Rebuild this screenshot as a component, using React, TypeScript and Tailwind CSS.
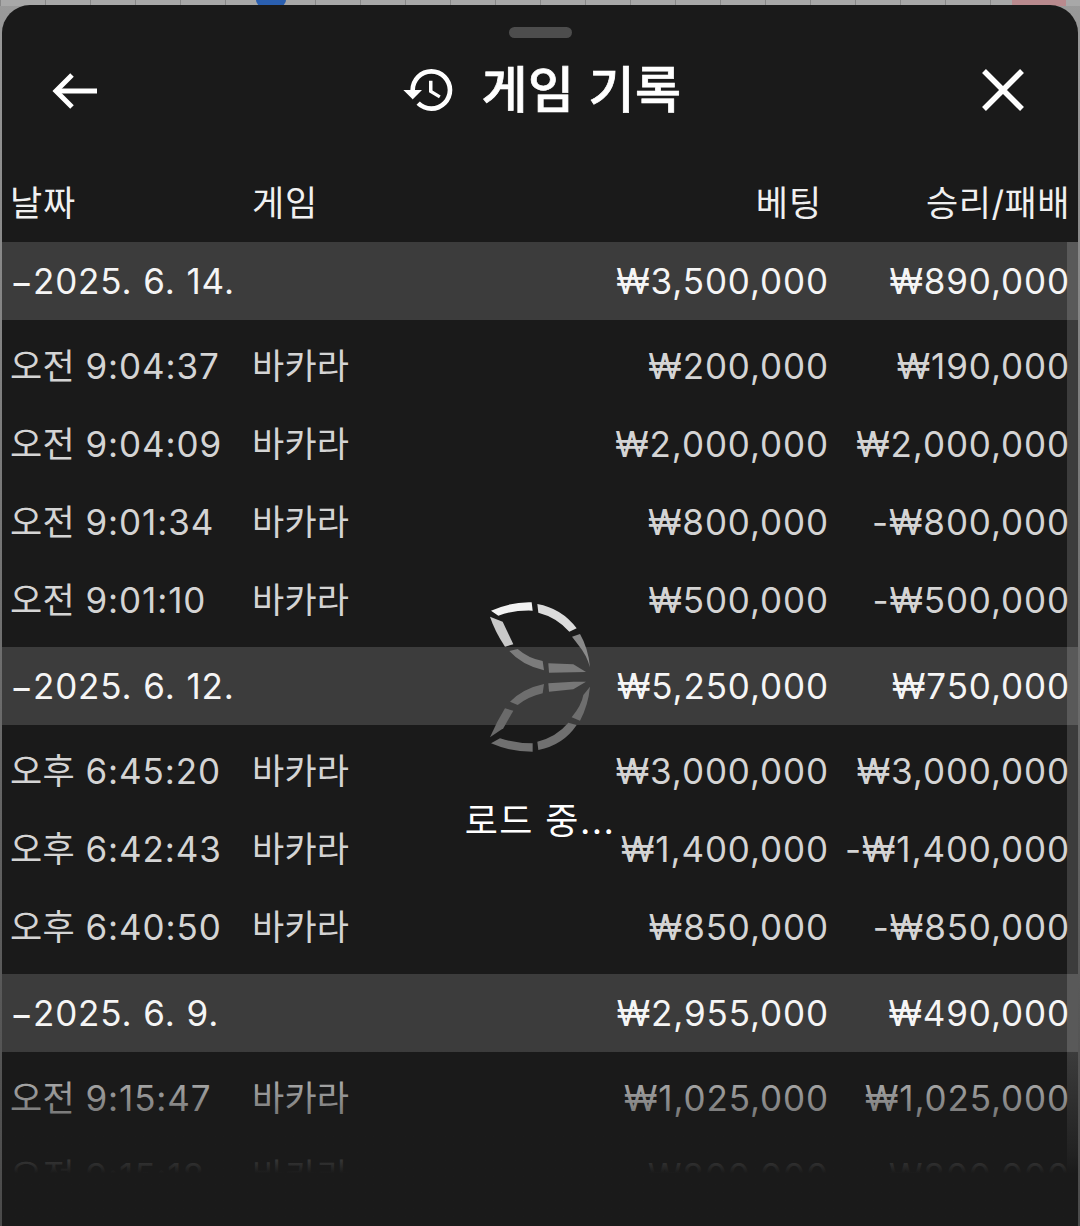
import React from "react";

const FONT = '"Inter","Noto Sans CJK KR",sans-serif';

type Row = [string, string, string, string];
const groups: { date: string; bet: string; win: string; rows: Row[] }[] = [
  { date: "2025. 6. 14.", bet: "₩3,500,000", win: "₩890,000", rows: [
    ["오전", "9:04:37", "₩200,000", "₩190,000"],
    ["오전", "9:04:09", "₩2,000,000", "₩2,000,000"],
    ["오전", "9:01:34", "₩800,000", "-₩800,000"],
    ["오전", "9:01:10", "₩500,000", "-₩500,000"],
  ]},
  { date: "2025. 6. 12.", bet: "₩5,250,000", win: "₩750,000", rows: [
    ["오후", "6:45:20", "₩3,000,000", "₩3,000,000"],
    ["오후", "6:42:43", "₩1,400,000", "-₩1,400,000"],
    ["오후", "6:40:50", "₩850,000", "-₩850,000"],
  ]},
  { date: "2025. 6. 9.", bet: "₩2,955,000", win: "₩490,000", rows: [
    ["오전", "9:15:47", "₩1,025,000", "₩1,025,000"],
    ["오전", "9:15:18", "₩800,000", "₩800,000"],
  ]},
];

const grid = "grid grid-cols-[242px_1fr_auto_240px] items-center pl-[8px] pr-[8px]";

function Logo() {
  const segs: [string, string][] = [
    ["M123 62 Q185 35 245 37 L248 62 Q190 60 145 77 Z", "#f2f2f2"],
    ["M262 42 Q335 55 380 115 L358 125 Q320 82 265 68 Z", "#dcdcdc"],
    ["M366 140 L390 132 Q415 175 420 232 Q410 195 385 165 Z", "#8a8a8a"],
    ["M295 220 L370 223 L408 246 L297 248 Z", "#7a7a7a"],
    ["M178 183 L203 177 Q235 205 278 213 L282 241 Q215 225 178 183 Z", "#7c7c7c"],
    ["M120 80 L158 95 L190 163 L165 170 Q135 125 120 80 Z", "#c8c8c8"],
    ["M295 280 L370 275 L408 275 L370 298 L297 305 Z", "#777777"],
    ["M282 282 L278 310 Q235 320 203 345 L180 335 Q220 295 282 282 Z", "#6e6e6e"],
    ["M420 290 Q415 345 390 392 L365 382 Q395 345 400 315 Z", "#6e6e6e"],
    ["M165 355 L190 362 L160 415 L120 442 Q140 395 165 355 Z", "#6a6a6a"],
    ["M380 405 L355 398 Q320 440 262 455 L265 480 Q340 465 380 405 Z", "#707070"],
    ["M123 460 L150 445 Q200 460 248 460 L248 485 Q180 485 123 460 Z", "#707070"],
  ];
  return (
    <svg width="180" height="176" viewBox="0 0 540 528" className="block">
      {segs.map(([d, f], i) => <path key={i} d={d} fill={f} />)}
    </svg>
  );
}

export default function App() {
  return (
    <div className="relative h-[1226px] w-[1080px] overflow-hidden bg-gradient-to-b from-[#9a9a9a] to-[#4a4a4a] pt-[5px] pr-[2px] pl-[2px]" style={{ fontFamily: FONT }}>
      <div className="absolute inset-x-0 top-0 h-[6px] bg-[repeating-linear-gradient(90deg,#888888_0,#888888_1px,#a8a8a8_1px,#a8a8a8_45px)]" />
      <div className="absolute left-[256px] top-0 h-[6px] w-[30px] rounded-b-full bg-[#2a5fb0]" />
      <div className="absolute left-[1012px] top-0 h-[6px] w-[54px] bg-[#b98a8e]" />
      <div className="relative flex h-full flex-col overflow-hidden rounded-t-[28px] bg-[#1a1a1a] text-white">
        <div className="mx-auto mt-[22px] h-[11px] w-[63px] rounded-full bg-[#4d4d4d]" />
        <div className="relative mt-[19px] flex h-[64px] items-center justify-center pl-[2px] pt-[2px]">
          <svg className="absolute left-[46px] top-[7px]" width="54" height="54" viewBox="0 0 54 54" fill="none" stroke="white" strokeWidth="5">
            <path d="M9 27H49" />
            <path d="M24 11 8 27l16 16" />
          </svg>
          <div className="flex items-center gap-[25px]">
            <svg width="56" height="56" viewBox="0 0 24 24" fill="white">
              <path d="M13 3a9 9 0 0 0-9 9H1l3.89 3.89.07.14L9 12H6c0-3.87 3.13-7 7-7s7 3.13 7 7-3.13 7-7 7c-1.93 0-3.68-.79-4.94-2.06l-1.42 1.42A8.954 8.954 0 0 0 13 21a9 9 0 0 0 0-18zm-1 5v5l4.28 2.54.72-1.21-3.5-2.08V8H12z" />
            </svg>
            <span className="text-[50px] font-medium leading-none tracking-[0.5px] [-webkit-text-stroke:0.7px_white]">게임 기록</span>
          </div>
          <svg className="absolute left-[974px] top-[6px]" width="54" height="54" viewBox="0 0 54 54" fill="none" stroke="white" strokeWidth="5.5">
            <path d="M8 8 46 46M46 8 8 46" />
          </svg>
        </div>

        <div className="mt-[49px] text-[35px] leading-[40px] tracking-[0.9px]">
          <div className={`${grid} h-[72px] pb-[6px] text-[#f0f0f0]`}>
            <div>날짜</div><div>게임</div><div className="pr-[8px] text-right">베팅</div><div className="text-right tracking-[0.5px]">승리/패배</div>
          </div>
          {groups.map((g) => (
            <div key={g.date}>
              <div className={`${grid} h-[78px] bg-[#3c3c3c] text-[#f5f5f5]`}>
                <div>−{g.date}</div><div /><div className="pr-px text-right">{g.bet}</div><div className="text-right">{g.win}</div>
              </div>
              <div className="pt-[8px] pb-[7px] text-[#d4d4d4]">
                {g.rows.map((r) => (
                  <div key={r[1]} className={`${grid} h-[78px] pb-[2px]`}>
                    <div><span className="tracking-[0.4px]">{r[0]} </span>{r[1]}</div>
                    <div className="tracking-[0.2px]">바카라</div>
                    <div className="pr-px text-right">{r[2]}</div><div className="text-right">{r[3]}</div>
                  </div>
                ))}
              </div>
            </div>
          ))}
        </div>

        <div className="absolute right-0 top-[237px] h-[984px] w-[11px] bg-white/15" />
        <div className="absolute inset-x-0 bottom-0 h-[176px] bg-gradient-to-b from-[#1a1a1a00] via-[#1a1a1acc] via-60% to-[#1a1a1a] to-70%" />

        <div className="absolute left-[448px] top-[585px] flex flex-col items-center">
          <Logo />
          <div className="mt-[35px] w-[180px] whitespace-nowrap text-center text-[36px] leading-[40px] tracking-[1.4px]">로드 중...</div>
        </div>
      </div>
    </div>
  );
}
